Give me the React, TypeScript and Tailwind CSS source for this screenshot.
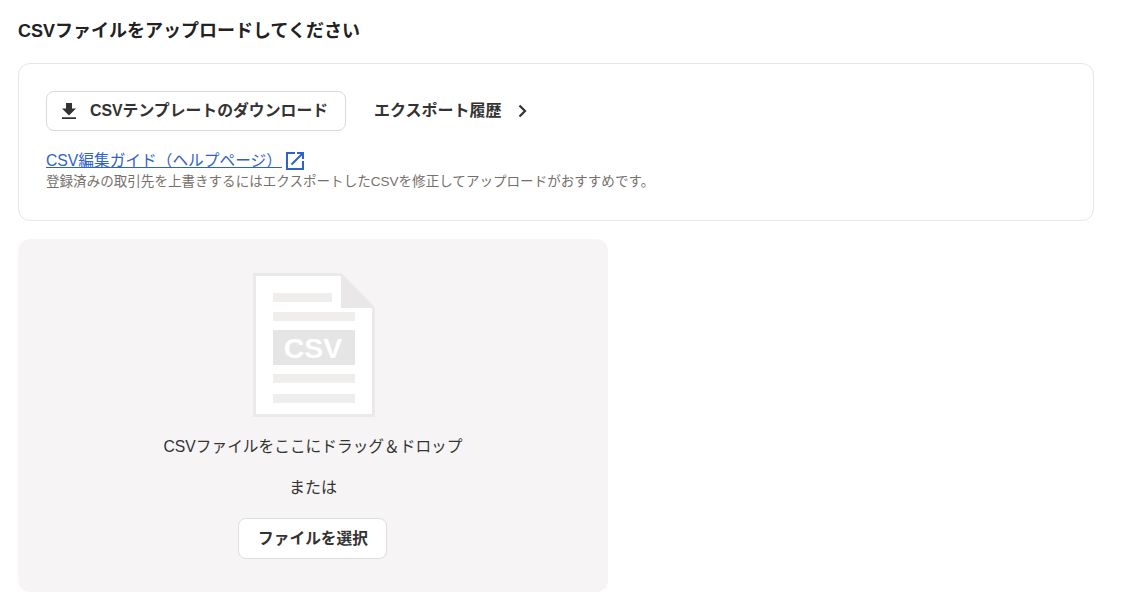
import React from 'react';

const FONT = "font-['Liberation_Sans','Noto_Sans_CJK_JP',sans-serif]";

const DownloadIcon = () => (
  <svg width="24" height="24" viewBox="0 0 24 24" fill="#333" className="shrink-0">
    <path d="M19 9.5h-4V4H9v5.5H5l7 7 7-7zM5 18.2V20h14v-1.8H5z" />
  </svg>
);

const ChevronIcon = () => (
  <svg width="24" height="24" viewBox="0 0 24 24" fill="none" stroke="#333" strokeWidth="2.2" className="shrink-0">
    <path d="M9.5 6.5 15 12l-5.5 5.5" />
  </svg>
);

const ExternalIcon = () => (
  <svg width="24" height="24" viewBox="0 0 24 24" fill="#2f62c9" className="shrink-0">
    <path d="M19 19H5V5h7V3H3v18h18v-9h-2v7zM14 3v2h3.59l-9.83 9.83 1.41 1.41L19 6.41V10h2V3h-7z" />
  </svg>
);

// placeholder sheet with the CSV label
const CsvFile = () => (
  <svg width="122" height="144" viewBox="0 0 122 144" className="block ml-[2px]">
    <path d="M1.5 1.5H88L120.5 35v107.5H1.5z" fill="#fff" stroke="#ebe9ea" strokeWidth="3" />
    <path d="M88 1.5V35h32.5z" fill="#e9e7e8" />
    <rect x="20" y="20" width="59" height="9" fill="#efeeed" />
    <rect x="20" y="39" width="82" height="9" fill="#efeeed" />
    <rect x="20" y="57" width="82" height="35" fill="#e6e5e5" />
    <text x="60" y="85" textAnchor="middle" fontSize="28.5" fontWeight="700" fill="#fff" fontFamily="Liberation Sans, sans-serif">CSV</text>
    <rect x="20" y="101" width="82" height="9" fill="#efeeed" />
    <rect x="20" y="121" width="82" height="9" fill="#efeeed" />
  </svg>
);

export default function App() {
  return (
    <div className={`${FONT} bg-white min-h-[609px] px-[18px] pt-[20px] text-[#333]`}>
      <h1 className="text-lg font-bold leading-[22px] text-[#222]">CSVファイルをアップロードしてください</h1>

      <section className="mt-[21px] w-[1076px] h-[158px] border border-[#e6e6e6] rounded-xl pt-[27px] pl-[27px]">
        <div className="flex items-center">
          <button className="flex items-center w-[300px] h-[40px] border border-[#d9d9d9] rounded-lg pl-[10px] gap-[9px] text-[15.85px] font-bold">
            <DownloadIcon />
            CSVテンプレートのダウンロード
          </button>
          <a className="flex items-center ml-[28px] text-base font-bold gap-[8px]">
            エクスポート履歴
            <ChevronIcon />
          </a>
        </div>
        <div className="mt-[19px] flex items-center h-[22px]">
          <a className="text-[15.7px] leading-[22px] underline text-[#2f62c9]">CSV編集ガイド（ヘルプページ）</a>
          <span className="ml-[1px]"><ExternalIcon /></span>
        </div>
        <p className="text-[13.55px] leading-[19px] text-[#76706c]">
          登録済みの取引先を上書きするにはエクスポートしたCSVを修正してアップロードがおすすめです。
        </p>
      </section>

      <section className="mt-[18px] w-[590px] h-[353px] bg-[#f6f4f5] rounded-xl flex flex-col items-center pt-[34px]">
        <CsvFile />
        <p className="mt-[19px] text-[15.7px] leading-[22px]">CSVファイルをここにドラッグ＆ドロップ</p>
        <p className="mt-[19px] text-base leading-[22px]">または</p>
        <button className="mt-[19px] w-[149px] h-[41px] pl-[2px] bg-white border border-[#dedede] rounded-lg text-[15.7px] font-bold -translate-x-[1px]">
          ファイルを選択
        </button>
      </section>
    </div>
  );
}
